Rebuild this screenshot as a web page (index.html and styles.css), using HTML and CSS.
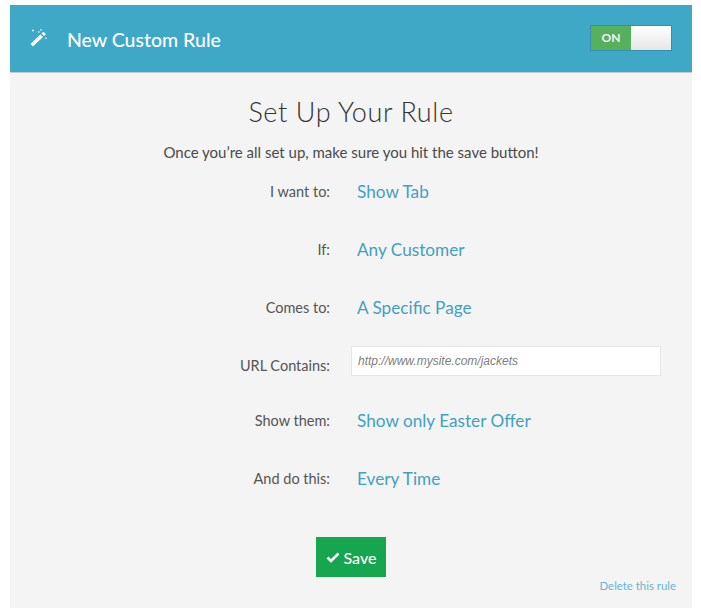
FILE: index.html
```html
<!DOCTYPE html>
<html lang="en">
<head>
<meta charset="utf-8">
<title>New Custom Rule</title>
<link rel="stylesheet" href="styles.css">
</head>
<body>
<main class="panel">
  <header class="bar">
    <div class="bar-title">
      <svg class="wand" width="18" height="18" viewBox="0 0 18 18" aria-hidden="true">
        <path d="M1 14.500 10.500 5.500l2.500 2.500-9.500 9a.7.7 0 0 1-1 0L1 15.500a.7.7 0 0 1 0-1z" fill="#fff"/>
        <path d="M11.500 4.500 13.500 2.700l2.500 2.500-2 1.900z" fill="#fff"/>
        <path d="M2 1.500h2M3 .5v2M8 3h1.500M8.700 2.300v1.400M11 .2v1.400M10.300 .9h1.400M16 8.500v1.400M15.300 9.200h1.400" stroke="#fff" stroke-width=".8" fill="none"/>
      </svg>
      <h1>New Custom Rule</h1>
    </div>
    <div class="switch"><span class="switch-on">ON</span><span class="switch-off"></span></div>
  </header>
  <section class="content">
    <h2>Set Up Your Rule</h2>
    <p class="lead">Once you’re all set up, make sure you hit the save button!</p>
    <div class="rows">
      <div class="row"><span class="label">I want to:</span><a class="value">Show Tab</a></div>
      <div class="row"><span class="label">If:</span><a class="value">Any Customer</a></div>
      <div class="row"><span class="label">Comes to:</span><a class="value">A Specific Page</a></div>
      <div class="row row-input"><span class="label">URL Contains:</span><input class="url" type="text" placeholder="http://www.mysite.com/jackets"></div>
      <div class="row"><span class="label">Show them:</span><a class="value">Show only Easter Offer</a></div>
      <div class="row"><span class="label">And do this:</span><a class="value">Every Time</a></div>
    </div>
    <div class="actions">
      <button class="save" type="button">
        <svg width="14" height="11" viewBox="0 0 14 11" aria-hidden="true"><path d="M1.500 5.500 5 9l7.500-7.500" fill="none" stroke="#fff" stroke-width="2.600"/></svg>
        Save
      </button>
    </div>
    <a class="delete">Delete this rule</a>
  </section>
</main>
</body>
</html>
```
FILE: styles.css
```css
* { box-sizing: border-box; }
html, body { margin: 0; height: 100%; background: #fff; }
body { padding: 5px 9px 0 10px; font-family: Lato, "Open Sans", sans-serif; overflow: hidden; }
.panel { height: 603px; background: #f4f4f4; display: flex; flex-direction: column; }
.bar {
  height: 68px; background: #40a8c7; border-bottom: 1px solid #c4cdd0;
  display: flex; align-items: center; justify-content: space-between;
  padding: 0 20px;
}
.bar-title { display: flex; align-items: center; gap: 19px; }
.bar-title h1 { margin: 2px 0 0; font-size: 19.5px; font-weight: 500; color: #fff; }
.wand { display: block; margin-bottom: 2px; }
.switch {
  width: 82px; height: 26px; display: flex; border: 1px solid #368ea9; margin-top: -2px;
}
.switch-on {
  width: 40px; background: #57b05b; color: #f4f4f4; font-size: 12px; font-weight: 700;
  display: flex; align-items: center; justify-content: center; padding-bottom: 1px;
}
.switch-off { flex: 1; background: linear-gradient(#fff, #e6e6e6); }
.content { flex: 1; position: relative; padding-top: 23px; }
h2 { margin: 0; text-align: center; font-size: 27px; line-height: 32px; font-weight: 300; color: #333; letter-spacing: .6px; }
.lead { margin: 14px 0 0; text-align: center; font-size: 15px; line-height: 20px; color: #4a4a4a; }
.rows { margin-top: 1px; }
.row { display: flex; align-items: center; height: 58px; }
.label { width: 320px; text-align: right; font-size: 14.500px; line-height: 18px; color: #555; }
.value { margin-left: 27px; padding-bottom: 2px; font-size: 17.200px; color: #439fc2; }
.row-input { height: 55px; align-items: flex-start; }
.row-input .label { margin-top: 20px; }
.url { margin: 9px 0 0 21px; width: 310px; height: 30px; border: 1px solid #e6e6e6; background: #fff; padding: 0 6px; font: italic 12px "Liberation Sans", sans-serif; outline: 0; }
.url::placeholder { color: #808080; opacity: 1; }
.actions { padding-left: 306px; margin-top: 29px; }
.save {
  width: 70px; height: 40px; border: 0; background: #17a650; color: #fff;
  font: 500 16px Lato, sans-serif; display: flex; align-items: center; justify-content: center; gap: 4px; padding: 0;
}
.delete { position: absolute; right: 16px; bottom: 16px; font-size: 11.400px; color: #66b7d0; }
```
